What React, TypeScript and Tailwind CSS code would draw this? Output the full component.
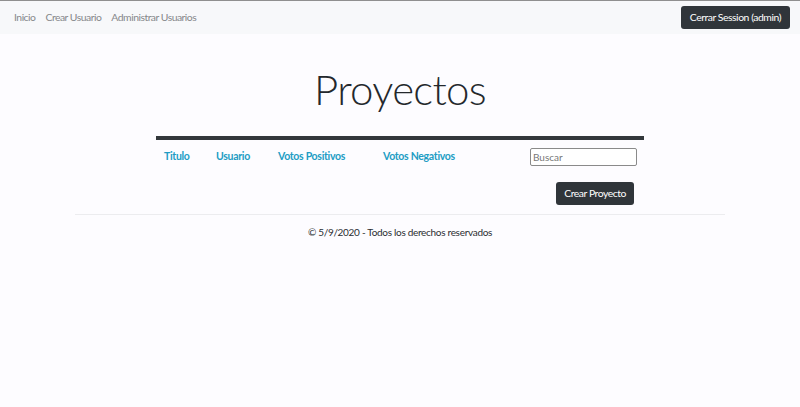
export default function App() {
  return (
    <div className="min-h-[407px] bg-[#fdfcff] font-['Lato',sans-serif] text-[#212529]">
      <nav className="h-[34px] border-t border-[#8f8f8f] bg-[#f7f8fa] flex items-center justify-between pl-[14px] pr-[10px]">
        <div className="flex gap-[10px] text-[10.4px] tracking-[-0.5px] text-[#85878a]">
          <a>Inicio</a>
          <a>Crear Usuario</a>
          <a>Administrar Usuarios</a>
        </div>
        <button className="h-[23px] px-[9px] rounded-[3px] bg-[#30353a] text-white text-[10.4px] tracking-[-0.45px]">
          Cerrar Session (admin)
        </button>
      </nav>
      <main className="w-[650px] mx-auto flex flex-col items-center">
        <h1 className="mt-[27px] text-[42px] tracking-[-0.7px] font-light leading-[56px] text-[#24282c]">Proyectos</h1>
        <div className="mt-[19px] w-[488px] border-t-[4px] border-[#33373b]">
          <div className="grid grid-cols-[52px_62px_105px_147px_122px] items-center h-[33px] text-[10.5px] tracking-[-0.3px] font-bold text-[#229cc4]">
            <div className="px-[8px]">Titulo</div>
            <div className="px-[8px]">Usuario</div>
            <div className="px-[8px]">Votos Positivos</div>
            <div className="px-[8px]">Votos Negativos</div>
            <div className="px-[8px]">
              <input
                placeholder="Buscar"
                className="w-[107px] h-[18px] border border-[#8a8a8a] rounded-[2px] bg-white px-[2px] text-[10px] tracking-normal font-normal text-[#333] placeholder:text-[#777] outline-none"
              />
            </div>
          </div>
          <div className="flex justify-end pr-[10px] mt-[9px]">
            <button className="h-[23px] px-[8px] rounded-[3px] bg-[#30353a] text-white text-[10.4px] tracking-[-0.45px]">
              Crear Proyecto
            </button>
          </div>
        </div>
        <div className="w-full mt-[9px] border-t border-[#ececef]"></div>
        <footer className="mt-[10px] text-[10px] tracking-[-0.3px] text-[#2a2d31]">© 5/9/2020 - Todos los derechos reservados</footer>
      </main>
    </div>
  );
}
